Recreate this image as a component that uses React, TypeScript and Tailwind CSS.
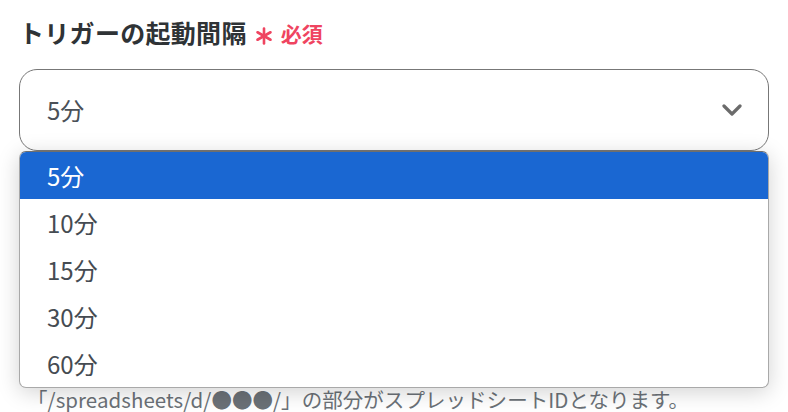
import { useState } from 'react';

const OPTIONS = ['5分', '10分', '15分', '30分', '60分'];

export default function App() {
  const [value, setValue] = useState('5分');

  return (
    <div className="h-[412px] overflow-hidden bg-white px-[19px] pt-[15px] font-['Noto_Sans_CJK_JP','Noto_Sans',sans-serif]">
      <div className="flex items-center h-[36px]">
        <span className="text-[25px] font-bold text-[#2f3336] tracking-[0.3px]">トリガーの起動間隔</span>
        <svg className="ml-[8px] mt-[5px]" width="18" height="18" viewBox="0 0 18 18" fill="none">
          <g stroke="#ef4460" strokeWidth="2.6" strokeLinecap="round">
            <line x1="9" y1="1.5" x2="9" y2="16.5" />
            <line x1="2.5" y1="5.25" x2="15.5" y2="12.75" />
            <line x1="2.5" y1="12.75" x2="15.5" y2="5.25" />
          </g>
        </svg>
        <span className="ml-[8px] text-[21px] font-bold text-[#ef4460] mt-[2px]">必須</span>
      </div>

      <div className="relative mt-[18px]">
        <button
          type="button"
          className="w-full h-[82px] flex items-center justify-between bg-white border border-[#777] rounded-[18px] pl-[27px] pr-[26px]"
        >
          <span className="text-[24px] text-[#4a5057]">{value}</span>
          <svg width="20" height="12" viewBox="0 0 20 12" fill="none">
            <polyline points="2,2 10,10 18,2" stroke="#6b6b6b" strokeWidth="3.2" strokeLinecap="round" strokeLinejoin="round" />
          </svg>
        </button>

        <ul className="absolute left-0 right-0 top-[82px] z-10 bg-white border border-[#a9a9a9] border-t-[#6f6f6f] rounded-[7px] overflow-hidden shadow-[0_4px_22px_rgba(0,0,0,0.18)]">
          {OPTIONS.map((opt, i) => (
            <li
              key={opt}
              onClick={() => setValue(opt)}
              className={`h-[47px] flex items-center pl-[27px] text-[24px] cursor-pointer ${i === 0 ? 'bg-[#1a67d2] text-white' : 'text-[#454b52]'}`}
            >
              {opt}
            </li>
          ))}
        </ul>

        <div className="h-[200px] mt-[16px] border border-[#bbb] rounded-[18px]" />
        <p className="mt-[20px] ml-[8px] text-[20.5px] text-[#6b7177] whitespace-nowrap leading-[24px] tracking-[0.05px]">
          「/spreadsheets/d/●●●/」の部分がスプレッドシートIDとなります。
        </p>
      </div>
    </div>
  );
}
